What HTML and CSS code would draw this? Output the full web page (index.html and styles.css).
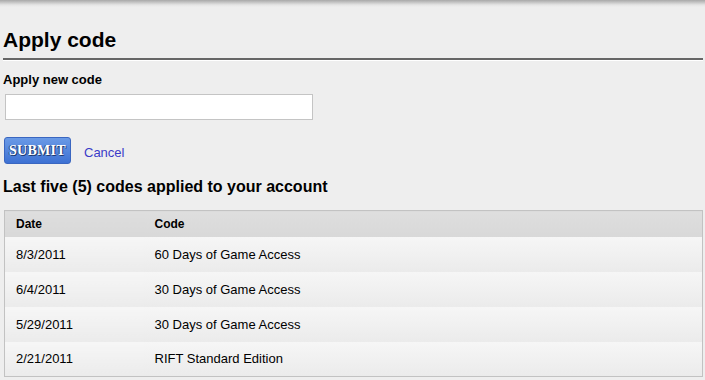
FILE: index.html
```html
<!DOCTYPE html>
<html lang="en">
<head>
    <meta charset="UTF-8">
    <title>Apply code</title>
    <link rel="stylesheet" href="styles.css">
</head>
<body>
    <div class="top-shadow"></div>
    <div class="container">
        <h1 class="title">Apply code</h1>
        <div class="rule"></div>

        <form class="code-form" onsubmit="return false">
            <label for="code-input" class="field-label">Apply new code</label>
            <input type="text" id="code-input" class="code-input" autocomplete="off">
            <div class="actions">
                <button type="submit" class="submit-button">SUBMIT</button>
                <a href="#" class="cancel-link">Cancel</a>
            </div>
        </form>

        <h2 class="subtitle">Last five (5) codes applied to your account</h2>

        <table class="codes-table">
            <thead>
                <tr>
                    <th class="col-date">Date</th>
                    <th>Code</th>
                </tr>
            </thead>
            <tbody>
                <tr><td>8/3/2011</td><td>60 Days of Game Access</td></tr>
                <tr><td>6/4/2011</td><td>30 Days of Game Access</td></tr>
                <tr><td>5/29/2011</td><td>30 Days of Game Access</td></tr>
                <tr><td>2/21/2011</td><td>RIFT Standard Edition</td></tr>
            </tbody>
        </table>
    </div>
</body>
</html>
```

FILE: styles.css
```css
* {
    margin: 0;
    padding: 0;
    box-sizing: border-box;
}

body {
    font-family: Arial, "Liberation Sans", sans-serif;
    background-color: #eeeeee;
    color: #000;
}

.top-shadow {
    height: 7px;
    background: linear-gradient(to bottom, #a8a8a8, #e4e4e4 70%, #eeeeee);
}

.container {
    padding: 0 2px 0 4px;
}

.title {
    font-size: 21px;
    font-weight: bold;
    line-height: 24px;
    margin-top: 21px;
    margin-left: -1px;
}

.rule {
    border-top: 2px solid #666666;
    border-bottom: 1px solid #ffffff;
    margin: 6px 0 0 -1px;
}

.code-form {
    display: flex;
    flex-direction: column;
    align-items: flex-start;
}

.field-label {
    font-size: 13px;
    font-weight: bold;
    line-height: 16px;
    margin: 11px 0 0 -1px;
}

.code-input {
    width: 308px;
    height: 26px;
    margin: 6px 0 0 1px;
    border: 1px solid #c4c4c4;
    background: #fff;
    font-size: 13px;
    padding: 0 4px;
    outline: none;
}

.actions {
    display: flex;
    align-items: center;
    gap: 13px;
    margin-top: 17px;
}

.submit-button {
    width: 67px;
    height: 27px;
    border: 1px solid #3a66c0;
    border-radius: 3px;
    background: linear-gradient(to bottom, #6a9ae6, #3d71d3);
    color: #fff;
    font-family: "Liberation Serif", "Times New Roman", serif;
    font-weight: bold;
    font-size: 14px;
    letter-spacing: 0.3px;
    text-shadow: 1px 1px 0 #1e3a70, -1px 0 0 #2a4d92;
    cursor: pointer;
}

.cancel-link {
    font-size: 13px;
    color: #3b3bc8;
    text-decoration: none;
    padding-top: 3px;
}

.subtitle {
    font-size: 16px;
    font-weight: bold;
    line-height: 18px;
    margin: 14px 0 0 -1px;
}

.codes-table {
    width: 699px;
    margin-top: 14px;
    border: 1px solid #c2c2c2;
    border-collapse: collapse;
    font-size: 13px;
}

.codes-table th {
    text-align: left;
    font-size: 12px;
    font-weight: bold;
    height: 26px;
    padding: 0 12px 0 11px;
    background: linear-gradient(to bottom, #dedede, #d8d8d8);
}

.codes-table th.col-date {
    width: 139px;
}

.codes-table td {
    height: 35px;
    padding: 0 12px 0 11px;
    background: linear-gradient(to bottom, #f6f6f6, #ebebeb);
}
```
